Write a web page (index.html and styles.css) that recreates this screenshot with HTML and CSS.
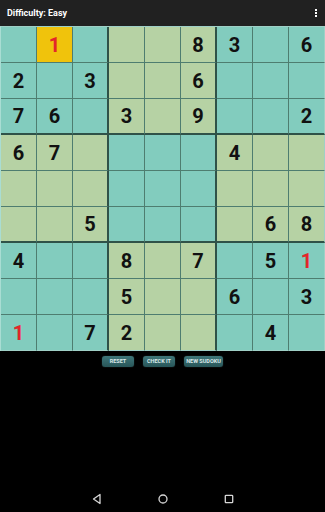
FILE: index.html
```html
<!DOCTYPE html>
<html lang="en">
<head>
    <meta charset="UTF-8">
    <meta name="viewport" content="width=device-width, initial-scale=1.0">
    <title>Sudoku</title>
    <link rel="stylesheet" href="styles.css">
</head>
<body>
    <div class="app">
        <div class="toolbar">
            <div class="toolbar-title">Difficulty: Easy</div>
            <div class="menu-dots"><span></span><span></span><span></span></div>
        </div>

        <div class="board">
            <!-- row 1 -->
            <div class="cell t"></div><div class="cell sel red">1</div><div class="cell t"></div>
            <div class="cell g"></div><div class="cell g"></div><div class="cell g">8</div>
            <div class="cell t">3</div><div class="cell t"></div><div class="cell t">6</div>
            <!-- row 2 -->
            <div class="cell t">2</div><div class="cell t"></div><div class="cell t">3</div>
            <div class="cell g"></div><div class="cell g"></div><div class="cell g">6</div>
            <div class="cell t"></div><div class="cell t"></div><div class="cell t"></div>
            <!-- row 3 -->
            <div class="cell t">7</div><div class="cell t">6</div><div class="cell t"></div>
            <div class="cell g">3</div><div class="cell g"></div><div class="cell g">9</div>
            <div class="cell t"></div><div class="cell t"></div><div class="cell t">2</div>
            <!-- row 4 -->
            <div class="cell g">6</div><div class="cell g">7</div><div class="cell g"></div>
            <div class="cell t"></div><div class="cell t"></div><div class="cell t"></div>
            <div class="cell g">4</div><div class="cell g"></div><div class="cell g"></div>
            <!-- row 5 -->
            <div class="cell g"></div><div class="cell g"></div><div class="cell g"></div>
            <div class="cell t"></div><div class="cell t"></div><div class="cell t"></div>
            <div class="cell g"></div><div class="cell g"></div><div class="cell g"></div>
            <!-- row 6 -->
            <div class="cell g"></div><div class="cell g"></div><div class="cell g">5</div>
            <div class="cell t"></div><div class="cell t"></div><div class="cell t"></div>
            <div class="cell g"></div><div class="cell g">6</div><div class="cell g">8</div>
            <!-- row 7 -->
            <div class="cell t">4</div><div class="cell t"></div><div class="cell t"></div>
            <div class="cell g">8</div><div class="cell g"></div><div class="cell g">7</div>
            <div class="cell t"></div><div class="cell t">5</div><div class="cell t red">1</div>
            <!-- row 8 -->
            <div class="cell t"></div><div class="cell t"></div><div class="cell t"></div>
            <div class="cell g">5</div><div class="cell g"></div><div class="cell g"></div>
            <div class="cell t">6</div><div class="cell t"></div><div class="cell t">3</div>
            <!-- row 9 -->
            <div class="cell t red">1</div><div class="cell t"></div><div class="cell t">7</div>
            <div class="cell g">2</div><div class="cell g"></div><div class="cell g"></div>
            <div class="cell t"></div><div class="cell t">4</div><div class="cell t"></div>
        </div>

        <div class="actions">
            <a href="#" class="btn btn-reset">RESET</a>
            <a href="#" class="btn btn-check">CHECK IT</a>
            <a href="#" class="btn btn-new">NEW SUDOKU</a>
        </div>

        <div class="navbar">
            <svg class="nav-icon" width="12" height="12" viewBox="0 0 12 12">
                <path d="M9 1.5 L2.5 6 L9 10.5 Z" fill="none" stroke="#d6d6d6" stroke-width="1.3" stroke-linejoin="round"/>
            </svg>
            <svg class="nav-icon" width="12" height="12" viewBox="0 0 12 12">
                <circle cx="6" cy="6" r="4" fill="none" stroke="#d6d6d6" stroke-width="1.3"/>
            </svg>
            <svg class="nav-icon" width="12" height="12" viewBox="0 0 12 12">
                <rect x="2.3" y="2.3" width="7.4" height="7.4" rx="0.8" fill="none" stroke="#d6d6d6" stroke-width="1.3"/>
            </svg>
        </div>
    </div>
</body>
</html>
```

FILE: styles.css
```css
body {
    margin: 0;
    padding: 0;
    background-color: #000;
    font-family: Roboto, "Liberation Sans", Arial, sans-serif;
}
.app {
    display: flex;
    flex-direction: column;
    min-height: 512px;
}
.toolbar {
    height: 26px;
    background-color: #212121;
    display: flex;
    align-items: center;
    justify-content: space-between;
    padding: 0 7px;
    box-shadow: 0 1px 2px rgba(0, 0, 0, 0.6);
}
.toolbar-title {
    color: #fff;
    font-size: 9px;
    font-weight: bold;
}
.menu-dots {
    display: flex;
    flex-direction: column;
    gap: 1px;
    margin-right: 1px;
}
.menu-dots span {
    width: 2px;
    height: 2px;
    background-color: #fff;
}
.board {
    display: grid;
    grid-template-columns: repeat(9, 36px);
    grid-auto-rows: 36px;
    border-left: 1px solid #a9ddd3;
    border-top: 1px solid #9fd0c6;
    width: 324px;
}
.cell {
    box-sizing: border-box;
    border-right: 1px solid #4e7d70;
    border-bottom: 1px solid #4e7d70;
    display: flex;
    justify-content: center;
    align-items: center;
    font-size: 20px;
    font-weight: bold;
    color: #111;
}
.cell:nth-child(9n+3),
.cell:nth-child(9n+6) {
    border-right: 2px solid #2f5248;
}
.cell:nth-child(n+19):nth-child(-n+27),
.cell:nth-child(n+46):nth-child(-n+54) {
    border-bottom: 2px solid #2f5248;
}
.cell:nth-child(9n) {
    border-right-color: #9fd0c6;
}
.cell:nth-child(n+73) {
    border-bottom-color: #9fd0c6;
}
.t {
    background-color: #82ccbe;
}
.g {
    background-color: #b6d2a4;
}
.sel {
    background-color: #f0c30c;
}
.red {
    color: #e3262a;
}
.actions {
    display: flex;
    justify-content: center;
    gap: 9px;
    margin-top: 5px;
}
.btn {
    height: 11px;
    line-height: 11px;
    border-radius: 3px;
    background: linear-gradient(#3f7679, #285659);
    color: #dbe9e9;
    font-size: 5.5px;
    font-weight: bold;
    text-align: center;
    text-decoration: none;
    box-shadow: 0 0 1px rgba(120, 170, 170, 0.6);
}
.btn-reset {
    width: 32px;
}
.btn-check {
    width: 32px;
}
.btn-new {
    width: 39px;
}
.navbar {
    margin-top: auto;
    height: 24px;
    display: flex;
    justify-content: center;
    align-items: center;
    gap: 54px;
    padding-bottom: 1px;
}
```
